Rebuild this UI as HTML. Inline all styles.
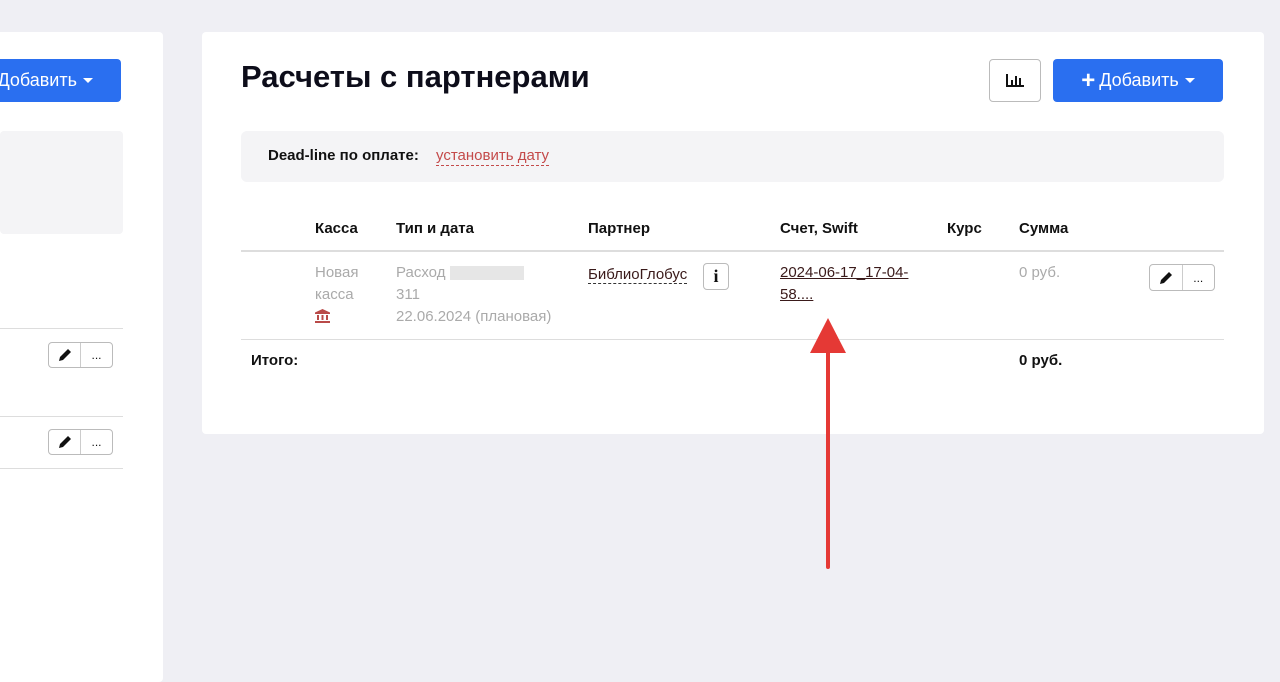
<!DOCTYPE html>
<html><head><meta charset="utf-8"><style>
*{box-sizing:border-box;margin:0;padding:0}
body{width:1280px;height:672px;background:#efeff4;font-family:"Liberation Sans",Arial,sans-serif;position:relative;overflow:hidden;color:#111}
.abs{position:absolute}
.card{background:#fff;border-radius:4px}
.btnb{background:#2a6ff0;color:#fff;border-radius:4px;font-size:18px;display:flex;align-items:center;justify-content:center}
.caret{display:inline-block;width:0;height:0;border-left:5px solid transparent;border-right:5px solid transparent;border-top:5px solid #fff;margin-left:6px}
.th{font-size:15px;font-weight:bold;top:220px}
.g{color:#aaa;font-size:15px;line-height:22px}
.bg{border:1px solid #bbb;border-radius:4px;background:#fff;display:flex}
.bg div{flex:1;display:flex;align-items:center;justify-content:center;font-size:12px}
.bg div+div{border-left:1px solid #ccc}
</style></head><body>
<div class="abs card" style="left:-10px;top:32px;width:173px;height:650px"></div>
<div class="abs btnb" style="left:-10px;top:59px;width:131px;height:43px;justify-content:flex-end;padding-right:28px">Добавить<span class="caret"></span></div>
<div class="abs" style="left:0;top:131px;width:123px;height:103px;background:#f4f4f6;border-radius:4px"></div>
<div class="abs" style="left:0;top:328px;width:123px;height:1px;background:#ddd"></div>
<div class="abs" style="left:0;top:416px;width:123px;height:1px;background:#ddd"></div>
<div class="abs" style="left:0;top:468px;width:123px;height:1px;background:#ddd"></div>
<div class="abs bg" style="left:48px;top:342px;width:65px;height:26px"><div><svg width="14" height="14" viewBox="0 0 14 14"><path d="M1 13l1-4 8-8 3 3-8 8z" fill="#111"/></svg></div><div>...</div></div>
<div class="abs bg" style="left:48px;top:429px;width:65px;height:26px"><div><svg width="14" height="14" viewBox="0 0 14 14"><path d="M1 13l1-4 8-8 3 3-8 8z" fill="#111"/></svg></div><div>...</div></div>
<div class="abs card" style="left:202px;top:32px;width:1062px;height:402px"></div>
<div class="abs" style="left:241px;top:59px;font-size:31px;font-weight:bold;color:#0d0d1a">Расчеты с партнерами</div>
<div class="abs" style="left:989px;top:59px;width:52px;height:43px;border:1px solid #bbb;border-radius:4px;background:#fff">
<svg class="abs" style="left:16px;top:13px" width="19" height="15" viewBox="0 0 19 15"><path d="M1 1v12h17" stroke="#111" stroke-width="2" fill="none"/><rect x="5" y="7" width="2" height="5" fill="#111"/><rect x="9" y="3" width="2" height="9" fill="#111"/><rect x="13" y="5" width="2" height="7" fill="#111"/></svg></div>
<div class="abs btnb" style="left:1053px;top:59px;width:170px;height:43px"><b style="font-size:24px;margin-right:4px;line-height:1">+</b>Добавить<span class="caret"></span></div>
<div class="abs" style="left:241px;top:131px;width:983px;height:51px;background:#f4f4f6;border-radius:6px"></div>
<div class="abs" style="left:268px;top:147px;font-size:15px;font-weight:bold">Dead-line по оплате:</div>
<div class="abs" style="left:436px;top:147px;font-size:15px;color:#c44a4a;border-bottom:1px dashed #c44a4a;padding-bottom:1px">установить дату</div>
<div class="abs th" style="left:315px">Касса</div>
<div class="abs th" style="left:396px">Тип и дата</div>
<div class="abs th" style="left:588px">Партнер</div>
<div class="abs th" style="left:780px">Счет, Swift</div>
<div class="abs th" style="left:947px">Курс</div>
<div class="abs th" style="left:1019px">Сумма</div>
<div class="abs" style="left:241px;top:250px;width:983px;height:2px;background:#ddd"></div>
<div class="abs g" style="left:315px;top:262px">Новая<br>касса</div>
<svg class="abs" style="left:315px;top:309px" width="15" height="14" viewBox="0 0 15 14"><path d="M7.5 0L15 3.5V5H0V3.5Z" fill="#b94a48"/><rect x="2" y="6" width="2" height="5" fill="#b94a48"/><rect x="6.5" y="6" width="2" height="5" fill="#b94a48"/><rect x="11" y="6" width="2" height="5" fill="#b94a48"/><rect x="0" y="12" width="15" height="2" fill="#b94a48"/></svg>
<div class="abs g" style="left:396px;top:262px">Расход <span style="display:inline-block;width:74px;height:14px;background:#e6e6e6;vertical-align:middle"></span><br>311<br>22.06.2024 (плановая)</div>
<div class="abs" style="left:588px;top:266px;font-size:15px;color:#3a1a1a;border-bottom:1px dashed #333">БиблиоГлобус</div>
<div class="abs" style="left:703px;top:263px;width:26px;height:27px;border:1px solid #bbb;border-radius:4px;font-weight:bold;font-family:'Liberation Serif',serif;font-size:18px;text-align:center;line-height:25px">i</div>
<div class="abs" style="left:780px;top:262px;font-size:15px;line-height:22px;color:#3a1a1a;text-decoration:underline">2024-06-17_17-04-<br>58....</div>
<div class="abs g" style="left:1019px;top:262px">0 руб.</div>
<div class="abs bg" style="left:1149px;top:264px;width:66px;height:27px"><div><svg width="14" height="14" viewBox="0 0 14 14"><path d="M1 13l1-4 8-8 3 3-8 8z" fill="#111"/></svg></div><div>...</div></div>
<div class="abs" style="left:241px;top:339px;width:983px;height:1px;background:#ddd"></div>
<div class="abs" style="left:251px;top:352px;font-size:15px;font-weight:bold">Итого:</div>
<div class="abs" style="left:1019px;top:352px;font-size:15px;font-weight:bold">0 руб.</div>
<svg class="abs" style="left:800px;top:310px" width="60" height="262"><line x1="28" y1="40" x2="28" y2="257" stroke="#e53935" stroke-width="4" stroke-linecap="round"/><path d="M28 8 L46 43 L10 43 Z" fill="#e53935"/></svg>
</body></html>
